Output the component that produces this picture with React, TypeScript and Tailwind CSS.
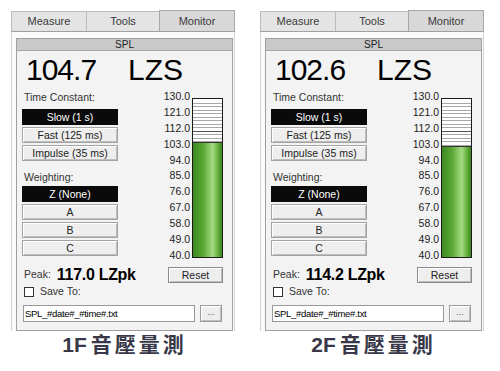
import React from "react";

const LEVEL_TOP = 130;
const LEVEL_BOT = 40;

function Meter({ level }: { level: number }) {
  const w = 31;
  const h = 160;
  const innerTop = 1;
  const innerBot = h - 1;
  const span = innerBot - innerTop;
  const yOf = (db: number) => innerTop + ((LEVEL_TOP - db) / (LEVEL_TOP - LEVEL_BOT)) * span;
  const fillY = yOf(level);
  const lines: number[] = [];
  for (let db = LEVEL_TOP - 2; db > level; db -= 2) lines.push(db);
  return (
    <svg width={w} height={h} viewBox={`0 0 ${w} ${h}`} className="block">
      <defs>
        <linearGradient id={`g${level}`} x1="0" x2="1" y1="0" y2="0">
          <stop offset="0" stopColor="#3f8a22" />
          <stop offset="0.35" stopColor="#5aa834" />
          <stop offset="0.68" stopColor="#a7da86" />
          <stop offset="0.85" stopColor="#68b43e" />
          <stop offset="1" stopColor="#3d8620" />
        </linearGradient>
      </defs>
      <rect x="0.5" y="0.5" width={w - 1} height={h - 1} fill="#ffffff" stroke="#1a1a1a" />
      {lines.map((db) => {
        const y = Math.round(yOf(db)) + 0.5;
        return (
          <line key={db} x1="1" x2={w - 1} y1={y} y2={y} stroke={db % 9 === 4 ? "#555" : "#a8a8a8"} strokeWidth="1" />
        );
      })}
      <line x1="1" x2={w - 1} y1={Math.round(fillY) - 0.5} y2={Math.round(fillY) - 0.5} stroke="#333" />
      <rect x="1" y={Math.round(fillY)} width={w - 2} height={h - 1 - Math.round(fillY)} fill={`url(#g${level})`} />
    </svg>
  );
}

function Btn({ label, active }: { label: string; active?: boolean }) {
  if (active) {
    return (
      <div className="h-[16px] w-[96px] bg-[#0a0a0a] text-white text-[10.5px] leading-[16px] text-center">
        {label}
      </div>
    );
  }
  return (
    <div className="h-[16px] w-[96px] border border-[#a3a3a3] bg-[#eeeeee] text-[#222] text-[10.5px] leading-[14px] text-center shadow-[inset_1px_1px_0_#ffffff,inset_-1px_-1px_0_#bdbdbd]">
      {label}
    </div>
  );
}

const scale = ["130.0", "121.0", "112.0", "103.0", "94.0", "85.0", "76.0", "67.0", "58.0", "49.0", "40.0"];

function Panel({ value, peak, level, prefix }: { value: string; peak: string; level: number; prefix: string }) {
  return (
    <div className="w-[224px] flex flex-col">
      {/* tabs */}
      <div className="flex items-end h-[21px] border-b border-[#a0a0a0]">
        <div className="w-[75px] h-[20px] border-t border-l border-[#bcbcbc] bg-[#e4e4e4] text-[11px] text-[#3a3a3a] leading-[19px] text-center">
          Measure
        </div>
        <div className="w-[73px] h-[20px] border-t border-l border-[#bcbcbc] bg-[#e4e4e4] text-[11px] text-[#3a3a3a] leading-[19px] text-center">
          Tools
        </div>
        <div className="w-[76px] h-[21px] border-t border-l border-r border-[#a8a8a8] bg-[#d8d8d8] text-[11px] text-[#3a3a3a] leading-[21px] text-center">
          Monitor
        </div>
      </div>
      {/* tab page */}
      <div className="border-l border-r border-[#d4d4d4] bg-[#fbfbfb] pl-[4px] pr-[2px] pt-[6px]">
        <div className="w-[217px] h-[293px] border border-[#a0a0a0] bg-[#f3f3f3] flex flex-col">
          <div className="h-[12px] bg-[#c9c9c9] border-b border-[#a6a6a6] text-[10px] leading-[11px] text-center text-[#222]">
            SPL
          </div>
          <div className="mt-[4px] h-[30px] flex items-start pl-[9px] text-[30px] leading-[30px] text-black">
            <span className="w-[102px] tracking-[-1px]">{value}</span>
            <span>LZS</span>
          </div>
          <div className="flex">
            <div className="ml-[5px] w-[96px] flex flex-col">
              <div className="mt-[6px] h-[12px] leading-[12px] text-[10.5px] text-[#333] pl-[2px]">Time Constant:</div>
              <div className="mt-[6px] flex flex-col gap-[2px]">
                <Btn label="Slow (1 s)" active />
                <Btn label="Fast (125 ms)" />
                <Btn label="Impulse (35 ms)" />
              </div>
              <div className="mt-[10px] h-[12px] leading-[12px] text-[10.5px] text-[#333] pl-[2px]">Weighting:</div>
              <div className="mt-[3px] flex flex-col gap-[2px]">
                <Btn label="Z (None)" active />
                <Btn label="A" />
                <Btn label="B" />
                <Btn label="C" />
              </div>
            </div>
            <div className="ml-auto mt-[4px] w-[40px] flex flex-col">
              {scale.map((s) => (
                <div key={s} className="h-[15.9px] leading-[15.9px] text-right text-[10.5px] text-[#222]">
                  {s}
                </div>
              ))}
            </div>
            <div className="ml-[2px] mr-[9px] mt-[13px]">
              <Meter level={level} />
            </div>
          </div>
          <div className="mt-[3px] h-[16px] flex items-center">
            <span className="ml-[7px] text-[10.5px] text-[#333]">Peak:</span>
            <span className="ml-[6px] text-[16px] font-bold text-black tracking-[-0.3px]">{peak} LZpk</span>
            <div className="ml-auto mr-[9px] w-[55px] h-[16px] border border-[#8c8c8c] bg-[#eeeeee] text-[10.5px] leading-[14px] text-center text-[#222] shadow-[inset_1px_1px_0_#ffffff,inset_-1px_-1px_0_#bdbdbd]">
              Reset
            </div>
          </div>
          <div className="mt-[3px] h-[12px] flex items-center">
            <div className="ml-[7px] w-[10px] h-[10px] border border-[#333] bg-white" />
            <span className="ml-[6px] text-[10.5px] text-[#333]">Save To:</span>
          </div>
          <div className="mt-[7px] flex">
            <div className="ml-[6px] w-[172px] h-[17px] border border-[#9a9a9a] bg-white text-[9.5px] leading-[15px] pl-[1px] text-black tracking-[-0.3px]">
              SPL_#date#_#time#.txt
            </div>
            <div className="ml-[5px] w-[22px] h-[17px] border border-[#9a9a9a] bg-[#eeeeee] text-[9px] leading-[13px] text-center text-[#555] shadow-[inset_1px_1px_0_#ffffff,inset_-1px_-1px_0_#bdbdbd]">
              ...
            </div>
          </div>
        </div>
      </div>
      <div className="mt-[1px] flex justify-center items-baseline text-[21px] leading-[25px] font-bold text-[#383848] font-['Liberation_Sans','Noto_Sans_CJK_TC',sans-serif]">
        <span className="mr-[4px]">{prefix}</span>
        <span className="tracking-[3px] mr-[-3px]">音壓量測</span>
      </div>
    </div>
  );
}

export default function App() {
  return (
    <div className="w-[500px] h-[371px] bg-white font-['Liberation_Sans','Noto_Sans_CJK_TC',Arial,sans-serif] overflow-hidden">
      <div className="flex gap-[25px] pl-[11px] pt-[11px]">
        <Panel value="104.7" peak="117.0" level={104.7} prefix="1F" />
        <Panel value="102.6" peak="114.2" level={102.6} prefix="2F" />
      </div>
    </div>
  );
}
